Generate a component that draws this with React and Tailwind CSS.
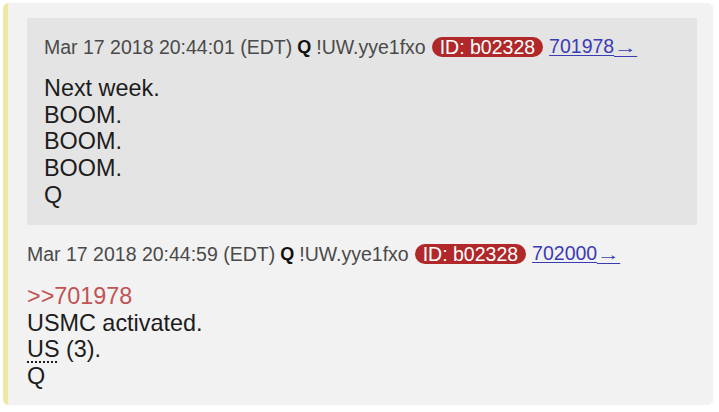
import React from 'react';

const font = { fontFamily: '"Liberation Sans", Arial, sans-serif' };

function PostHeader({ time, link }) {
  return (
    <div className="flex items-center whitespace-nowrap text-[19.5px] leading-[22px] text-[#4a4a4a]">
      <span>{time}</span>
      <span className="ml-[5px] text-[18px] font-bold text-[#111]">Q</span>
      <span className="ml-[5px]">!UW.yye1fxo</span>
      <span className="ml-[6px] rounded-full bg-[#b0282a] px-[8px] leading-[20px] text-white">ID: b02328</span>
      <a href="#" className="ml-[6px] text-[#3b3bb5] underline underline-offset-2">
        {link}
        <span className="inline-block w-[20px] origin-left scale-x-[1.45] text-[16px] underline underline-offset-[3px]">→</span>
      </a>
    </div>
  );
}

export default function App() {
  return (
    <div className="w-[719px] h-[412px] bg-white p-[3px]" style={font}>
      <div className="h-[402px] w-[710px] rounded-md border-l-[5px] border-[#ede9a4] bg-[#f2f2f2] pl-[19px] pr-[16px] pt-[15px] shadow-[0_0_1px_rgba(0,0,0,0.08)]">
        {/* quoted post */}
        <div className="h-[207px] bg-[#e4e4e4] pl-[17px] pt-[17px]">
          <PostHeader time="Mar 17 2018 20:44:01 (EDT)" link="701978" />
          <div className="mt-[16px] text-[23.4px] leading-[26.7px] text-[#1c1c1c]">
            <div>Next week.</div>
            <div>BOOM.</div>
            <div>BOOM.</div>
            <div>BOOM.</div>
            <div>Q</div>
          </div>
        </div>

        {/* reply */}
        <div className="mt-[17px]">
          <PostHeader time="Mar 17 2018 20:44:59 (EDT)" link="702000" />
          <div className="mt-[17px] text-[23.4px] leading-[26.7px] text-[#1c1c1c]">
            <div className="text-[#c05454]">&gt;&gt;701978</div>
            <div>USMC activated.</div>
            <div>
              <abbr className="underline decoration-dotted decoration-2 underline-offset-4" title="United States">US</abbr> (3).
            </div>
            <div>Q</div>
          </div>
        </div>
      </div>
    </div>
  );
}
